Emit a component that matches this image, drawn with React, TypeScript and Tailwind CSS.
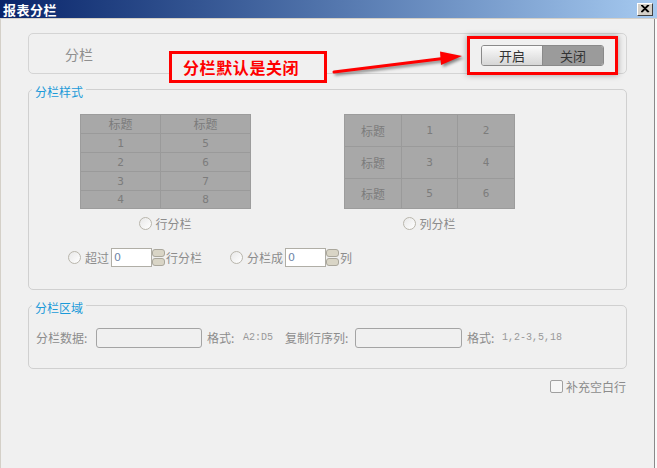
import React from "react";

const font = "font-['Noto_Sans_CJK_SC','Noto_Sans',sans-serif]";

function Radio() {
  return (
    <span className="inline-block w-[13px] h-[13px] rounded-full border border-[#b9b6ac] bg-gradient-to-br from-[#e8e8e8] to-[#ffffff] shrink-0" />
  );
}

function Spin() {
  return (
    <div className="flex flex-col justify-between w-[13px] h-[19px] py-[1px]">
      <div className="h-[8px] rounded-[3px] bg-[#d9d5c6] border border-[#aaa79c]" />
      <div className="h-[8px] rounded-[3px] bg-[#d9d5c6] border border-[#aaa79c]" />
    </div>
  );
}

function NumInput() {
  return (
    <div className="w-[41px] h-[19px] border border-[#b0aea6] bg-white flex items-center pl-[2px] text-[11px] leading-none text-[#6f86a8] font-['DejaVu_Sans',sans-serif]">
      0
    </div>
  );
}

function Legend({ children }: { children: React.ReactNode }) {
  return (
    <span className="absolute left-[3px] top-[-5px] px-[3px] bg-[#f0f0f0] text-[12px] leading-[14px] text-[#1b9ad9]">
      {children}
    </span>
  );
}

export default function App() {
  const leftRows = [
    ["1", "5"],
    ["2", "6"],
    ["3", "7"],
    ["4", "8"],
  ];
  const rightRows = [
    ["1", "2"],
    ["3", "4"],
    ["5", "6"],
  ];
  return (
    <div className={`w-[657px] h-[468px] flex flex-col bg-[#f0f0f0] ${font} text-[#8c8c8c] overflow-hidden`}>
      {/* title bar */}
      <div className="h-[19px] flex items-center justify-between bg-gradient-to-r from-[#0a246a] to-[#a6caf0] border-b border-[#d4d0c8] pl-[3px] pr-[4px]">
        <span className="text-white font-bold text-[13px] leading-none tracking-[0.5px]">报表分栏</span>
        <div className="w-[16px] h-[13px] bg-[#d4d0c8] border border-t-white border-l-white border-r-[#404040] border-b-[#404040] flex items-center justify-center">
          <svg width="9" height="8" viewBox="0 0 9 8">
            <path d="M1 0 L8 7 M0 0 L7 7 M8 0 L1 7 M7 0 L0 7" stroke="#000" strokeWidth="1.2" />
          </svg>
        </div>
      </div>

      <div className="flex-1 flex">
        <div className="w-[1px] bg-[#d4d0c8]" />
        <div className="flex-1 flex flex-col pl-[27px]">
          {/* top panel */}
          <div className="relative mt-[14px] w-[599px] h-[41px] rounded-[5px] border border-[#d4d4d4] flex items-center justify-between pl-[36px] pr-[22px]">
            <span className="text-[14px] leading-none text-[#8f8f8f] mt-[1px]">分栏</span>
            <div className="flex h-[21px] mt-[4px] rounded-[3px] border border-[#8a8a8a] overflow-hidden text-[13px] leading-none text-[#333]">
              <div className="w-[61px] flex items-center justify-center bg-gradient-to-b from-[#fbfbfb] to-[#d6d6d6] border-r border-[#8a8a8a]">开启</div>
              <div className="w-[60px] flex items-center justify-center bg-[#9b9b9b]">关闭</div>
            </div>
            {/* annotation box around toggle */}
            <div className="absolute left-[438px] top-[2px] w-[151px] h-[39px] border-[3px] border-[#ff0000] shadow-[0_0_6px_rgba(0,0,0,0.35)]" />
            {/* annotation label */}
            <div className="absolute left-[140px] top-[17px] w-[158px] h-[32px] border-[3px] border-[#ff0000] bg-[#f0f0f0] flex items-center pl-[11px]">
              <span className="text-[16px] leading-none font-bold text-[#ff0000] tracking-[0.6px]">分栏默认是关闭</span>
            </div>
            {/* arrow */}
            <svg className="absolute left-[300px] top-[14px] drop-shadow-[2px_2px_1.5px_rgba(0,0,0,0.45)]" width="170" height="32" viewBox="0 0 170 32">
              <path d="M5 24 L114 10.5" stroke="#ff0000" strokeWidth="3" strokeLinecap="round" />
              <polygon points="133,8 112,17 111,3.5" fill="#ff0000" />
            </svg>
          </div>

          {/* 分栏样式 */}
          <div className="relative mt-[15px] w-[599px] h-[201px] rounded-[5px] border border-[#d0d0d0] flex flex-col">
            <Legend>分栏样式</Legend>
            <div className="flex pt-[24px] pl-[51px] gap-[93px]">
              <div className="flex flex-col items-center">
                <div className="w-[171px] border border-[#9c9c9c] bg-[#a8a8a8] text-[#7c7c7c] text-[12px] leading-none">
                  <div className="flex h-[19px] border-b border-[#9a9a9a]">
                    <div className="w-[80px] flex items-center justify-center border-r border-[#9a9a9a]">标题</div>
                    <div className="flex-1 flex items-center justify-center">标题</div>
                  </div>
                  {leftRows.map((r, i) => (
                    <div key={i} className={`flex ${i < 3 ? "h-[19px] border-b border-[#9a9a9a]" : "h-[17px]"}`}>
                      <div className="w-[80px] flex items-center justify-center border-r border-[#9a9a9a] font-['DejaVu_Sans_Mono',monospace] text-[11px]">{r[0]}</div>
                      <div className="flex-1 flex items-center justify-center font-['DejaVu_Sans_Mono',monospace] text-[11px]">{r[1]}</div>
                    </div>
                  ))}
                </div>
                <div className="mt-[8px] flex items-center gap-[3px] text-[12px] leading-none">
                  <Radio />
                  <span>行分栏</span>
                </div>
              </div>
              <div className="flex flex-col items-center">
                <div className="w-[171px] border border-[#9c9c9c] bg-[#a8a8a8] text-[#7c7c7c] text-[12px] leading-none">
                  {rightRows.map((r, i) => (
                    <div key={i} className={`flex ${i < 2 ? "h-[32px] border-b border-[#9a9a9a]" : "h-[29px]"}`}>
                      <div className="w-[57px] flex items-center justify-center border-r border-[#9a9a9a]">标题</div>
                      <div className="w-[56px] flex items-center justify-center border-r border-[#9a9a9a] font-['DejaVu_Sans_Mono',monospace] text-[11px]">{r[0]}</div>
                      <div className="flex-1 flex items-center justify-center font-['DejaVu_Sans_Mono',monospace] text-[11px]">{r[1]}</div>
                    </div>
                  ))}
                </div>
                <div className="mt-[8px] flex items-center gap-[3px] text-[12px] leading-none">
                  <Radio />
                  <span>列分栏</span>
                </div>
              </div>
            </div>
            <div className="mt-[18px] pl-[39px] flex items-center text-[12px] leading-none">
              <Radio />
              <span className="ml-[4px]">超过</span>
              <div className="ml-[2px]"><NumInput /></div>
              <Spin />
              <span className="ml-[1px]">行分栏</span>
              <div className="ml-[28px]"><Radio /></div>
              <span className="ml-[4px]">分栏成</span>
              <div className="ml-[2px]"><NumInput /></div>
              <Spin />
              <span className="ml-[1px]">列</span>
            </div>
          </div>

          {/* 分栏区域 */}
          <div className="relative mt-[15px] w-[599px] h-[64px] rounded-[5px] border border-[#d0d0d0] flex items-start pt-[22px] pl-[7px] text-[12px] leading-none">
            <Legend>分栏区域</Legend>
            <div className="flex items-center h-[20px]">
              <span className="w-[60px]">分栏数据:</span>
              <div className="w-[106px] h-[20px] rounded-[3px] border border-[#a4a4a4]" />
              <span className="ml-[5px] w-[36px]">格式:</span>
              <span className="font-['Liberation_Mono',monospace] text-[10px] text-[#999]">A2:D5</span>
              <span className="ml-[12px] w-[70px]">复制行序列:</span>
              <div className="w-[107px] h-[20px] rounded-[3px] border border-[#a4a4a4]" />
              <span className="ml-[5px] w-[35px]">格式:</span>
              <span className="font-['Liberation_Mono',monospace] text-[10px] text-[#999]">1,2-3,5,18</span>
            </div>
          </div>

          <div className="w-[599px] mt-[11px] flex justify-end items-center pr-[1px] text-[12px] leading-none">
            <span className="w-[13px] h-[13px] rounded-[2px] border border-[#a0a0a0] bg-[#f6f6f6]" />
            <span className="ml-[3px]">补充空白行</span>
          </div>
        </div>
        <div className="w-[1px] bg-[#8a8a8a]" />
        <div className="w-[2px] bg-[#fafafa]" />
      </div>
    </div>
  );
}
